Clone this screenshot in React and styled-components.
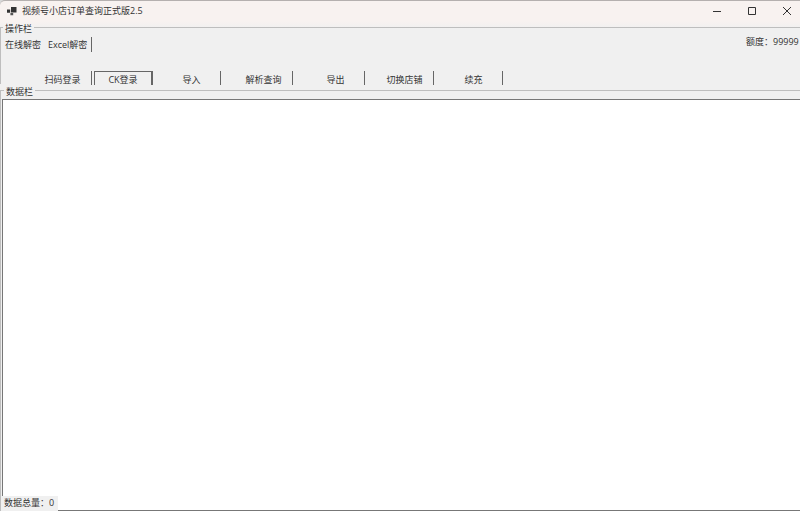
import React from 'react'
import styled, { createGlobalStyle, css } from 'styled-components'

const GlobalStyle = createGlobalStyle`
  * {
    box-sizing: border-box;
  }

  body {
    margin: 0;
    overflow: hidden;
    background: #d8d8d8;
    color: #333;
    font-family: 'Open Sans', 'Noto Sans CJK SC', sans-serif;
    font-size: 9px;
    line-height: 14px;
  }

  button {
    font: inherit;
    color: inherit;
    white-space: nowrap;
  }
`

const Window = styled.main`
  display: flex;
  flex-direction: column;
  height: 100vh;
  overflow: hidden;
  background: linear-gradient(#f8f2f0 20px, #f0f0f0 28px);
  border-top: 1px solid #b5b0af;
  border-top-left-radius: 5px;
`

const TitleBar = styled.header`
  display: flex;
  align-items: center;
  gap: 9px;
  height: 20px;
  padding-left: 7px;
`

const Title = styled.h1`
  flex: 1;
  margin: 0 0 0 -4px;
  font-size: 9px;
  font-weight: 400;
`

const WindowButton = styled.button`
  display: flex;
  align-items: center;
  justify-content: center;
  width: 26px;
  height: 20px;
  padding: 0;
  border: 0;
  background: transparent;
`

const Group = styled.fieldset`
  display: flow-root;
  min-width: 0;
  margin: 0;
  padding: 0;
  border: 0 solid #bebebe;
  border-top-width: 1px;
  border-left-width: 1px;
`

const ActionGroup = styled(Group)`
  height: 63px;
`

const DataGroup = styled(Group)`
  flex: 1;
  min-height: 0;
  padding: 2px 0 0 1px;
`

const Legend = styled.legend`
  height: 13px;
  margin-left: 2px;
  padding: 2px 2px 0;
  line-height: 12px;
`

const TopRow = styled.div`
  display: flex;
  justify-content: space-between;
  height: 37px;
`

const Tabs = styled.div`
  display: flex;
  align-items: flex-start;
  gap: 7px;
  padding: 3px 0 0 4px;
`

const Tab = styled.button`
  height: 15px;
  padding: 0;
  border: 0;
  background: transparent;
  line-height: 15px;

  ${({ $divided }) => $divided && css`
    padding-right: 4px;
    border-right: 1px solid #666;
    line-height: 13px;
  `}
`

const Quota = styled.output`
  width: 54px;
  padding-top: 1px;
  white-space: nowrap;
`

const Toolbar = styled.div`
  display: flex;
  padding-left: 33px;
`

const ToolButton = styled.button`
  width: 58px;
  height: 14px;
  margin-right: ${({ $gap }) => $gap}px;
  padding: 2px 0 0;
  border: 0;
  border-right: 1px solid #666;
  background: transparent;
  line-height: 14px;

  ${({ $focused }) => $focused && css`
    width: 59px;
    border: 1px solid #666;
    border-right-width: 2px;
    border-bottom: 0;
    padding-top: 1px;
  `}
`

const DataView = styled.section`
  position: relative;
  height: 100%;
  min-height: 60px;
  background: #fff;
  border: 1px solid #777;
  border-right: 0;
`

const Total = styled.output`
  position: absolute;
  bottom: -1px;
  left: -2px;
  width: 57px;
  height: 15px;
  padding-left: 3px;
  background: #f0f0f0;
  line-height: 13px;
`

const actions = [
  { label: '扫码登录', gap: 2 },
  { label: 'CK登录', gap: 10, focused: true },
  { label: '导入', gap: 14 },
  { label: '解析查询', gap: 14 },
  { label: '导出', gap: 11 },
  { label: '切换店铺', gap: 11 },
  { label: '续充', gap: 0 },
]

const AppIcon = () => (
  <svg width="10" height="9" viewBox="0 0 10 9" aria-hidden="true">
    <path fill="#333" d="M4 0h5.5v5.5H4zM0 2.5h3.2v3.2H0z" />
    <path fill="#555" d="M3.4 6h2.8v2.2H3.4z" />
  </svg>
)

const WindowIcon = ({ d }) => (
  <svg width="10" height="10" viewBox="0 0 10 10" fill="none" stroke="#333" aria-hidden="true">
    <path d={d} />
  </svg>
)

export default function App() {
  return (
    <>
      <GlobalStyle />
      <Window>
        <TitleBar>
          <AppIcon />
          <Title>视频号小店订单查询正式版2.5</Title>
          <WindowButton aria-label="最小化">
            <WindowIcon d="M1 5.5h8" />
          </WindowButton>
          <WindowButton aria-label="最大化">
            <WindowIcon d="M1.5 1.5h7v7h-7z" />
          </WindowButton>
          <WindowButton aria-label="关闭">
            <WindowIcon d="M1 1l8 8M9 1l-8 8" />
          </WindowButton>
        </TitleBar>
        <ActionGroup>
          <Legend>操作栏</Legend>
          <TopRow>
            <Tabs>
              <Tab>在线解密</Tab>
              <Tab $divided>Excel解密</Tab>
            </Tabs>
            <Quota>额度：99999</Quota>
          </TopRow>
          <Toolbar>
            {actions.map(({ label, gap, focused }) => (
              <ToolButton key={label} $gap={gap} $focused={focused}>{label}</ToolButton>
            ))}
          </Toolbar>
        </ActionGroup>
        <DataGroup>
          <Legend>数据栏</Legend>
          <DataView aria-label="数据栏">
            <Total>数据总量：0</Total>
          </DataView>
        </DataGroup>
      </Window>
    </>
  )
}
